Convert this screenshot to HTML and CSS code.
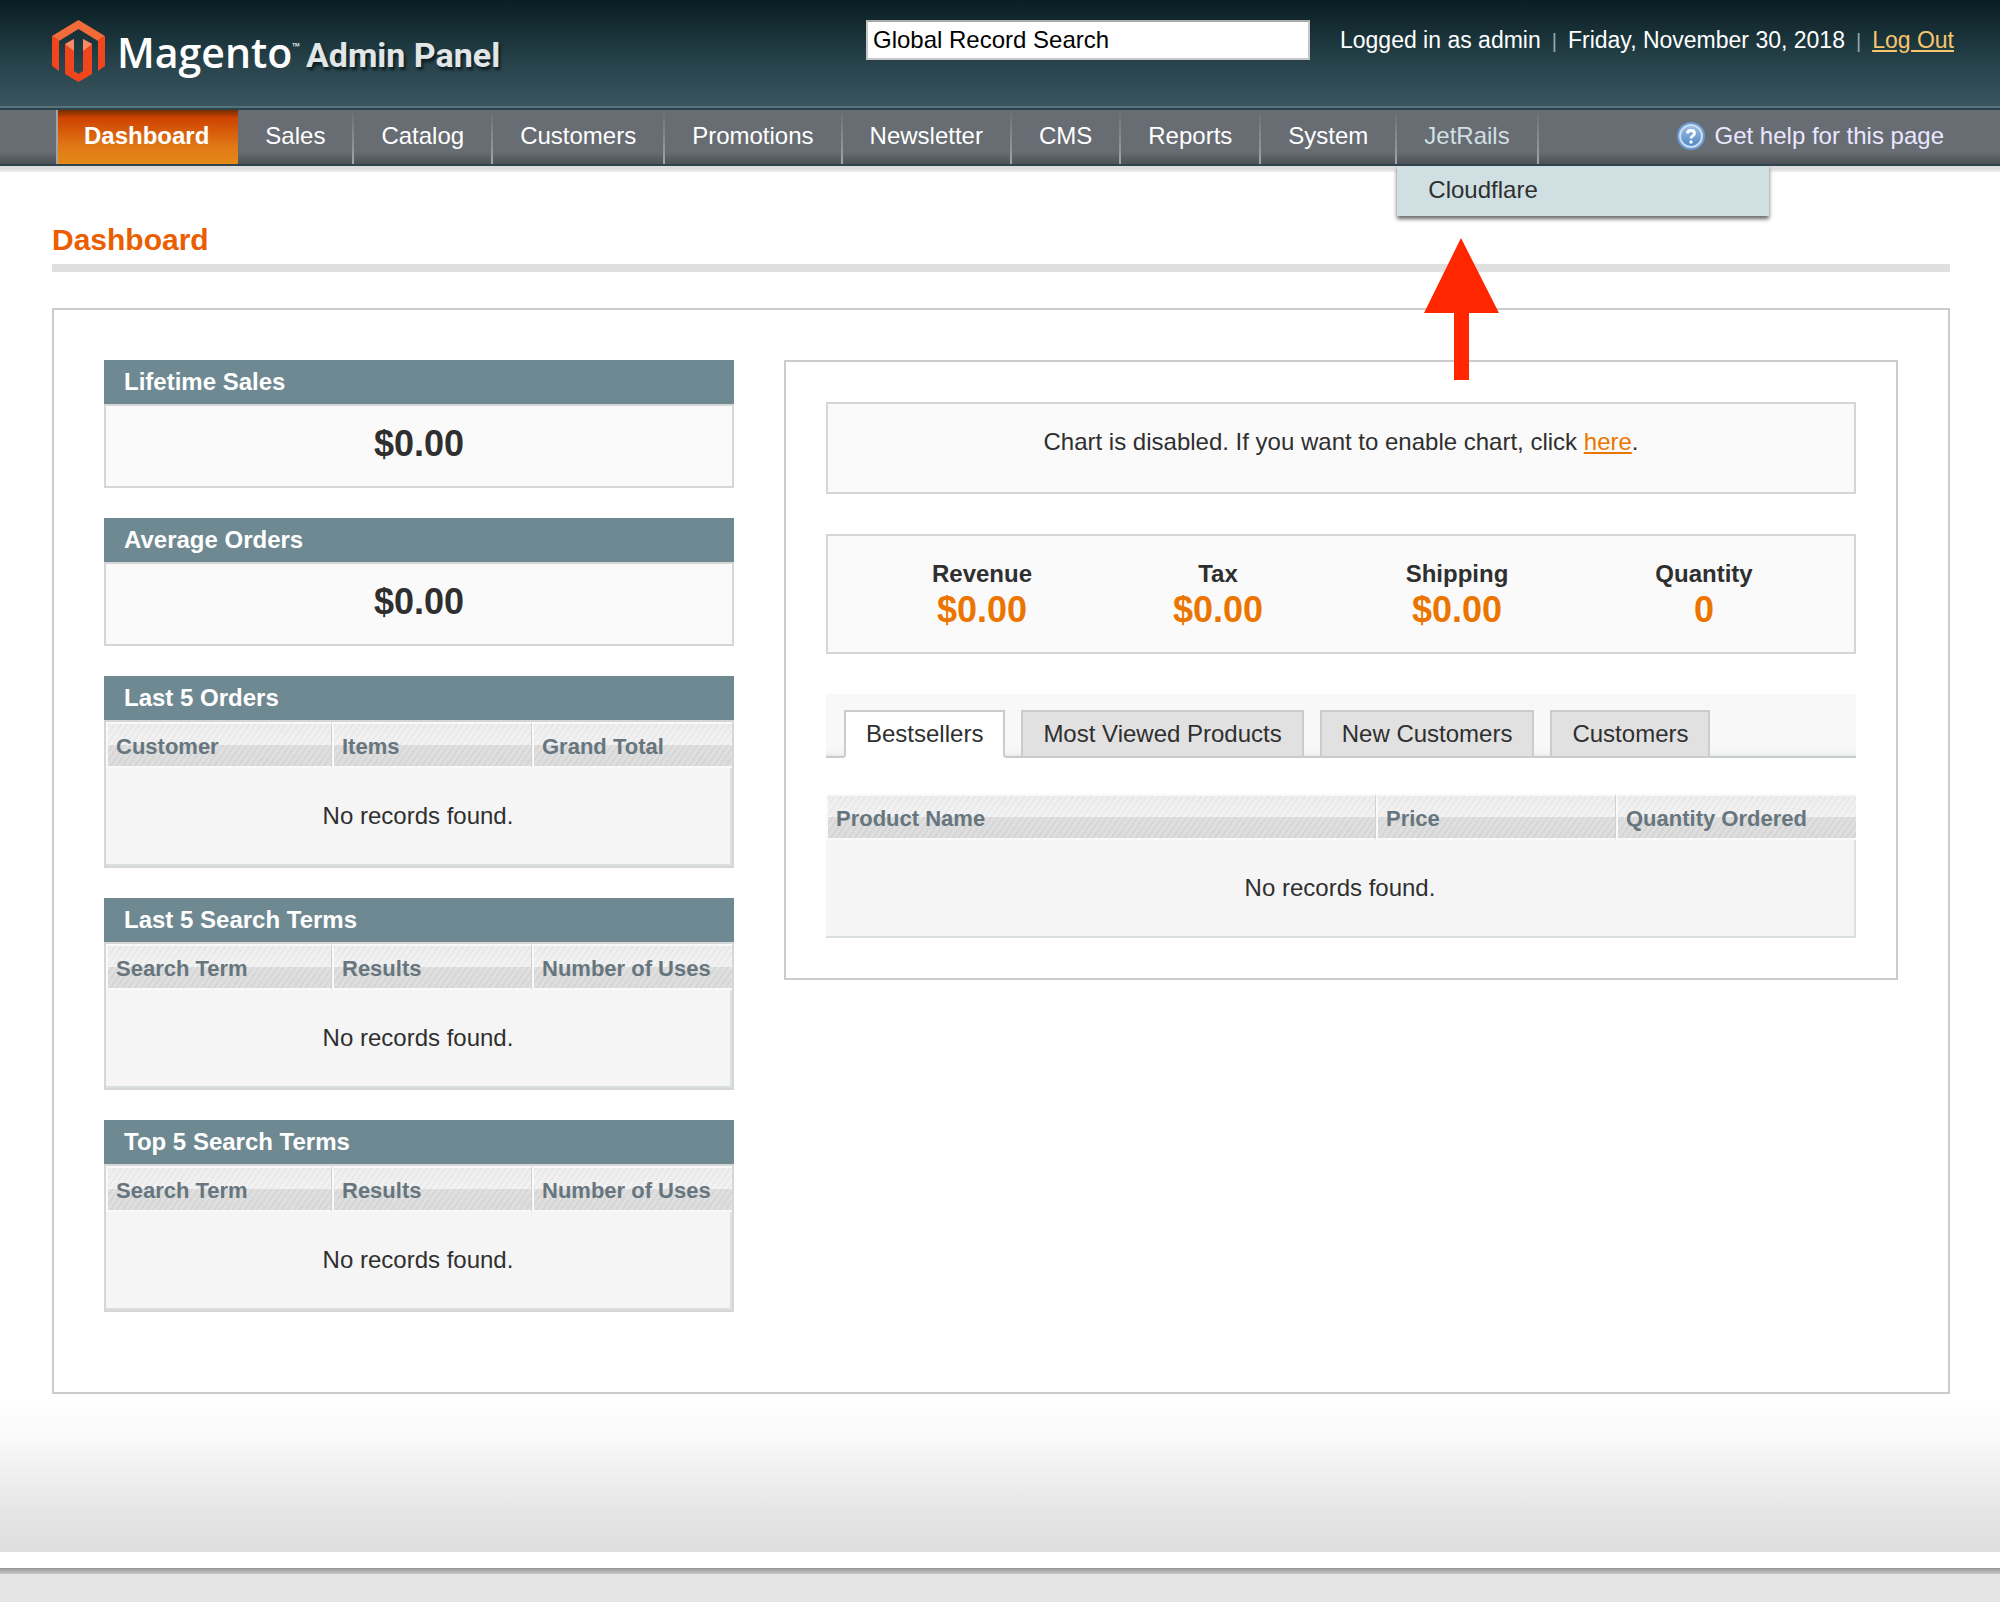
FILE: index.html
```html
<!DOCTYPE html>
<html lang="en">
<head>
<meta charset="utf-8">
<title>Dashboard / Magento Admin</title>
<link rel="stylesheet" href="styles.css">
</head>
<body>
<header class="header">
  <a class="logo" href="#" aria-label="Magento Admin Panel">
    <svg class="logo-mark" viewBox="0 0 53 62" aria-hidden="true">
      <path fill="#f26b3a" d="M26.500 0 53 16 46 21 26.500 9 7 21 0 16z"/>
      <path fill="#f1461d" d="M0 16 7 20V51L0 46zM53 16 46 20V51L53 46z"/>
      <path fill="#f1461d" d="M13 24 22 19V51L26.500 54 31 51V19L40 24V54L26.500 62 13 54z"/>
      <path fill="#f58b67" d="M22 19V31L13 24zM31 19V31L40 24z"/>
    </svg>
    <span class="logo-name">Magento<span class="logo-tm">™</span></span>
    <span class="logo-sub">Admin Panel</span>
  </a>
  <div class="header-right">
    <input class="search" type="text" value="Global Record Search" aria-label="Global Record Search">
    <p class="account">Logged in as admin<span class="pipe">|</span>Friday, November 30, 2018<span class="pipe">|</span><a class="logout" href="#">Log Out</a></p>
  </div>
</header>
<nav class="nav">
  <ul class="menu">
    <li class="active"><a href="#">Dashboard</a></li>
    <li><a href="#">Sales</a></li>
    <li><a href="#">Catalog</a></li>
    <li><a href="#">Customers</a></li>
    <li><a href="#">Promotions</a></li>
    <li><a href="#">Newsletter</a></li>
    <li><a href="#">CMS</a></li>
    <li><a href="#">Reports</a></li>
    <li><a href="#">System</a></li>
    <li class="open"><a href="#">JetRails</a>
      <ul class="submenu"><li><a href="#">Cloudflare</a></li></ul>
      <svg class="arrow" viewBox="0 0 76 142" aria-hidden="true"><path fill="#ff2600" d="M37 0 75 75H45V142H30V75H0z"/></svg>
    </li>
  </ul>
  <a class="help" href="#">
    <svg class="help-icon" viewBox="0 0 28 28" aria-hidden="true">
      <defs><linearGradient id="ball" x1="0" y1="0" x2="0" y2="1"><stop offset="0" stop-color="#9dbfe4"/><stop offset="1" stop-color="#4f88c6"/></linearGradient></defs>
      <circle cx="14" cy="14" r="13" fill="#c9dcf3" stroke="#6c98cb" stroke-width="2"/>
      <circle cx="14" cy="14" r="10" fill="url(#ball)"/>
      <path d="M10.500 11.500C10.500 7.500 17.500 7.500 17.500 11.500 17.500 14 14 13.800 14 16.500" fill="none" stroke="#fff" stroke-width="2.800"/>
      <circle cx="14" cy="20" r="1.700" fill="#fff"/>
    </svg>
    Get help for this page
  </a>
</nav>
<main class="main">
  <h1 class="title">Dashboard</h1>
  <div class="dashboard">
    <div class="side">
      <section class="card">
        <h2>Lifetime Sales</h2>
        <p class="amount">$0.00</p>
      </section>
      <section class="card">
        <h2>Average Orders</h2>
        <p class="amount">$0.00</p>
      </section>
      <section class="card">
        <h2>Last 5 Orders</h2>
        <div class="card-grid">
          <table class="grid">
            <colgroup><col><col class="col-a"><col class="col-a"></colgroup>
            <thead><tr><th>Customer</th><th>Items</th><th>Grand Total</th></tr></thead>
            <tbody><tr><td colspan="3">No records found.</td></tr></tbody>
          </table>
        </div>
      </section>
      <section class="card">
        <h2>Last 5 Search Terms</h2>
        <div class="card-grid">
          <table class="grid">
            <colgroup><col><col class="col-a"><col class="col-a"></colgroup>
            <thead><tr><th>Search Term</th><th>Results</th><th>Number of Uses</th></tr></thead>
            <tbody><tr><td colspan="3">No records found.</td></tr></tbody>
          </table>
        </div>
      </section>
      <section class="card">
        <h2>Top 5 Search Terms</h2>
        <div class="card-grid">
          <table class="grid">
            <colgroup><col><col class="col-a"><col class="col-a"></colgroup>
            <thead><tr><th>Search Term</th><th>Results</th><th>Number of Uses</th></tr></thead>
            <tbody><tr><td colspan="3">No records found.</td></tr></tbody>
          </table>
        </div>
      </section>
    </div>
    <div class="stats">
      <p class="notice">Chart is disabled. If you want to enable chart, click <a href="#">here</a>.</p>
      <dl class="totals">
        <div><dt>Revenue</dt><dd>$0.00</dd></div>
        <div><dt>Tax</dt><dd>$0.00</dd></div>
        <div><dt>Shipping</dt><dd>$0.00</dd></div>
        <div><dt>Quantity</dt><dd>0</dd></div>
      </dl>
      <div class="tabs" role="tablist">
        <button class="tab selected" type="button" role="tab" aria-selected="true">Bestsellers</button>
        <button class="tab" type="button" role="tab">Most Viewed Products</button>
        <button class="tab" type="button" role="tab">New Customers</button>
        <button class="tab" type="button" role="tab">Customers</button>
      </div>
      <table class="grid">
        <colgroup><col><col class="col-b"><col class="col-b"></colgroup>
        <thead><tr><th>Product Name</th><th>Price</th><th>Quantity Ordered</th></tr></thead>
        <tbody><tr><td colspan="3">No records found.</td></tr></tbody>
      </table>
    </div>
  </div>
</main>
<footer class="footer"></footer>
</body>
</html>
```
FILE: styles.css
```css
* { box-sizing: border-box; }

body {
  margin: 0;
  min-height: 100vh;
  display: flex;
  flex-direction: column;
  background: #fff;
  color: #2f2f2f;
  font: 24px/36px "Liberation Sans", Arial, sans-serif;
}

h1, h2, p, ul, dl, dd { margin: 0; padding: 0; }
ul { list-style: none; }

/* Header */
.header {
  display: flex;
  justify-content: space-between;
  align-items: flex-start;
  height: 110px;
  padding: 20px 46px 0 52px;
  border-bottom: 2px solid #2a444e;
  background: linear-gradient(#091f24 0, #0d2429 12px, #264149 60px, #3a555e 106px, #56727b 106px);
}
.logo {
  display: flex;
  color: #fff;
  text-decoration: none;
  white-space: nowrap;
}
.logo-mark { width: 53px; height: 62px; margin-right: 12px; }
.logo-name {
  margin-right: 6px;
  font: 600 41px/64px "Open Sans", sans-serif;
}
.logo-tm { font-size: 10px; line-height: 10px; vertical-align: 18px; }
.logo-sub {
  color: #e3e6e6;
  font: bold 34px/70px Roboto, "Liberation Sans", sans-serif;
  text-shadow: 2px 3px 3px #0b1c21;
}
.header-right { display: flex; gap: 30px; }
.search {
  width: 444px;
  height: 40px;
  padding: 0 5px;
  border: 2px solid #c6c6c6;
  border-top-color: #aaa;
  background: #fff;
  color: #000;
  font: 24px/36px "Liberation Sans", Arial, sans-serif;
}
.account { color: #fff; font-size: 23px; line-height: 40px; white-space: nowrap; }
.pipe { margin: 0 11px; color: #9aa5a8; font-size: 20px; }
.logout { color: #f6c66c; }

/* Navigation */
.nav {
  position: relative;
  z-index: 1;
  display: flex;
  justify-content: space-between;
  height: 56px;
  padding: 0 56px;
  border-bottom: 2px solid #2f444e;
  background: linear-gradient(#676d73 0, #676d73 42px, #4c5156 54px);
  box-shadow: 0 4px 0 #dedede, 0 6px 0 #ebebeb;
  line-height: 52px;
}
.nav a { color: #fff; text-decoration: none; white-space: nowrap; }
.menu { display: flex; }
.menu > li {
  position: relative;
  padding: 0 27px;
  border-right: 2px solid;
  border-image: linear-gradient(#676d73, #a3a7aa) 1;
}
.menu > .active {
  padding: 0 29px 0 26px;
  border: 0;
  border-left: 2px solid;
  border-image: linear-gradient(90deg, #a0a5a8, #8d3c12) 1;
  background: linear-gradient(#742e00 0, #ce4300 8px, #e07716 36px, #e58a18 54px);
  font-weight: bold;
}
.menu > .open > a { color: #d0dfe2; }
.submenu {
  position: absolute;
  top: 56px;
  left: 0;
  z-index: 2;
  width: 372px;
  height: 50px;
  padding: 0 31px;
  background: #d0dfe2;
  box-shadow: 0 3px 4px rgba(0, 0, 0, .6);
  clip-path: inset(0 -8px -12px -8px);
  line-height: 48px;
}
.submenu a { color: #2f2f2f; }
.arrow {
  position: absolute;
  top: 128px;
  left: 27px;
  z-index: 3;
  width: 76px;
  height: 142px;
}
.help { display: flex; align-items: center; gap: 10px; height: 52px; }
.nav .help { color: #ebe7ff; }
.help-icon { width: 28px; height: 28px; }

/* Page body */
.main {
  padding: 56px 50px 158px 52px;
  background: linear-gradient(to top, #dedede 0, #e5e5e5 38px, #f8f8f8 110px, #fff 150px);
}
.title {
  height: 50px;
  margin-bottom: 36px;
  border-bottom: 8px solid #dfdfdf;
  color: #eb5e00;
  font-size: 30px;
  line-height: 36px;
}
.dashboard {
  display: grid;
  grid-template-columns: 630fr 1114fr;
  gap: 50px;
  align-items: start;
  padding: 50px 50px 80px;
  border: 2px solid #ccc;
  background: #fff;
}
.side { display: grid; gap: 30px; }
.card h2 {
  padding: 0 20px;
  background: #6f8992;
  color: #fff;
  font-size: 24px;
  line-height: 44px;
}
.amount {
  padding: 18px 0 22px;
  border: 2px solid #d6d6d6;
  background: #fafafa;
  font-size: 36px;
  font-weight: bold;
  line-height: 40px;
  text-align: center;
}
.card-grid { border: 2px solid #d6d6d6; }

/* Data tables */
.grid {
  width: 100%;
  table-layout: fixed;
  border-collapse: separate;
  border-spacing: 0;
}
.col-a { width: 200px; }
.col-b { width: 240px; }
.grid th {
  height: 46px;
  padding: 4px 8px 0;
  border: 2px solid #f9f9f9;
  border-right: 1px solid #d1d1d1;
  background:
    repeating-linear-gradient(125deg, rgba(0, 0, 0, .025) 0 2px, rgba(255, 255, 255, .1) 2px 5px),
    linear-gradient(#ececec 0, #f2f2f2 21px, #dcdcdc 21px, #dadada 42px);
  color: #67767e;
  font-size: 22px;
  line-height: 38px;
  text-align: left;
}
.grid th:last-child { border-right: 0; }
.grid td {
  height: 98px;
  padding: 0;
  border: 2px solid #dae0df;
  border-width: 0 2px 2px 0;
  background: #f5f5f5;
  text-align: center;
}

/* Statistics */
.stats { padding: 40px; border: 2px solid #ccc; }
.notice {
  margin-bottom: 40px;
  padding: 20px 20px 32px;
  border: 2px solid #d6d6d6;
  background: #fafafa;
  text-align: center;
}
.notice a { color: #ea7601; }
.totals {
  display: grid;
  grid-template-columns: 246fr 226fr 252fr 242fr;
  margin-bottom: 40px;
  padding: 20px 29px 24px 31px;
  border: 2px solid #d6d6d6;
  background: #fafafa;
  font-weight: bold;
  text-align: center;
}
.totals dd { color: #ea7601; font-size: 36px; line-height: 36px; }
.tabs {
  display: flex;
  gap: 16px;
  margin-bottom: 36px;
  padding: 16px 18px 0;
  background: linear-gradient(to top, #c8cccc 2px, #e2e6e6 2px, #f2f2f2 4px, #f8f8f8 10px);
}
.tab {
  height: 48px;
  padding: 0 20px;
  border: 2px solid #ccc;
  background: #e1e1e1;
  color: #2f2f2f;
  font: 24px/42px "Liberation Sans", Arial, sans-serif;
  white-space: nowrap;
}
.tab.selected { border-bottom-color: #fff; background: #fff; }

/* Footer */
.footer {
  flex: 1;
  min-height: 50px;
  background: linear-gradient(#fff 0, #fff 16px, #929494 16px, #c8c8c8 22px, #e5e5e5 22px);
}
```
